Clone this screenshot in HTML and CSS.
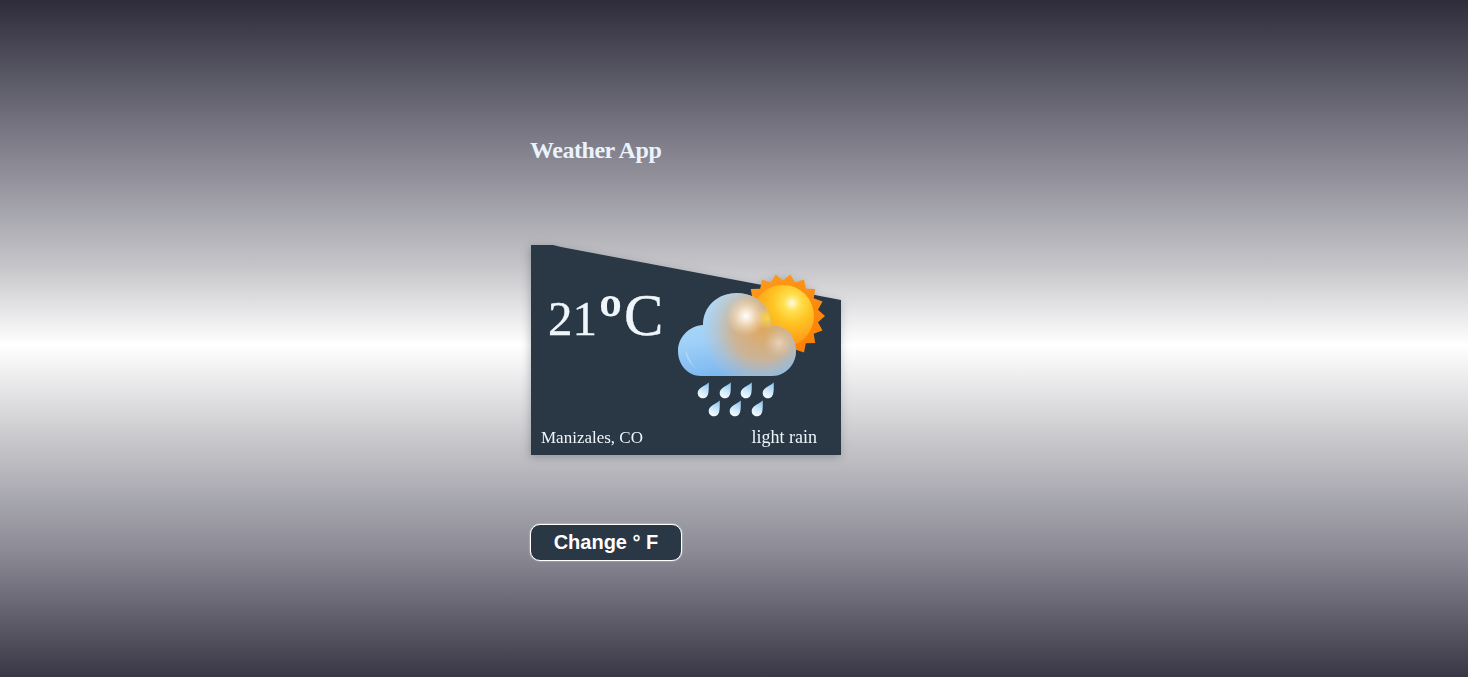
FILE: index.html
```html
<!DOCTYPE html>
<html lang="en">
<head>
<meta charset="utf-8">
<title>Weather App</title>
<link rel="stylesheet" href="styles.css">
</head>
<body>
<main class="app">
  <h1 class="title">Weather App</h1>
  <section class="card">
    <div class="card-top">
      <p class="temp"><span class="digits">21</span><span class="degree">º</span><span class="unit">C</span></p>
      <svg class="icon" width="165" height="160" viewBox="0 0 165 160" aria-label="light rain">
        <defs>
          <linearGradient id="spike" x1="0.2" y1="0" x2="0.8" y2="1">
            <stop offset="0" stop-color="#ff9a1a"/><stop offset="1" stop-color="#fb7f06"/>
          </linearGradient>
          <radialGradient id="sun" gradientUnits="userSpaceOnUse" cx="122" cy="38" r="46">
            <stop offset="0" stop-color="#fffbe0"/><stop offset="0.18" stop-color="#ffe04f"/>
            <stop offset="0.42" stop-color="#ffc524"/><stop offset="1" stop-color="#ff8f14"/>
          </radialGradient>
          <linearGradient id="cloudBase" x1="0" y1="0.1" x2="0.25" y2="1">
            <stop offset="0" stop-color="#b5dcf7"/><stop offset="0.55" stop-color="#9fd0f8"/><stop offset="1" stop-color="#7cb8f0"/>
          </linearGradient>
          <radialGradient id="warm" gradientUnits="userSpaceOnUse" cx="92" cy="64" r="62">
            <stop offset="0" stop-color="#dfa85e" stop-opacity="1"/><stop offset="0.5" stop-color="#d2b28e" stop-opacity="0.9"/>
            <stop offset="1" stop-color="#b9c4d0" stop-opacity="0"/>
          </radialGradient>
          <radialGradient id="glow" gradientUnits="userSpaceOnUse" cx="76" cy="51" r="20">
            <stop offset="0" stop-color="#fff" stop-opacity="1"/><stop offset="0.3" stop-color="#fbeedd" stop-opacity="0.85"/>
            <stop offset="1" stop-color="#f3d9b0" stop-opacity="0"/>
          </radialGradient>
          <radialGradient id="glow2" gradientUnits="userSpaceOnUse" cx="109" cy="78" r="15">
            <stop offset="0" stop-color="#ecd6bd" stop-opacity="0.9"/><stop offset="1" stop-color="#e0c4a4" stop-opacity="0"/>
          </radialGradient>
          <radialGradient id="yellow" gradientUnits="userSpaceOnUse" cx="97" cy="53" r="11">
            <stop offset="0" stop-color="#ffd93a" stop-opacity="0.9"/><stop offset="1" stop-color="#ffd93a" stop-opacity="0"/>
          </radialGradient>
          <linearGradient id="drop" x1="0.7" y1="0" x2="0.3" y2="1">
            <stop offset="0" stop-color="#8cc8ef"/><stop offset="0.55" stop-color="#d0e9fa"/><stop offset="1" stop-color="#f8fcff"/>
          </linearGradient>
          <path id="cloudShape" d="M31 111C18 111 8 100 8 86C8 72 19 61 33 60C33 42 47 28 67 28C86 28 101 42 101 60C116 60 126 72 126 86C126 100 115 111 102 111Z"/>
          <path id="rain" d="M5.8-10.5C5.8-5 5.9-2 5 1.5A5.3 5.3 0 1 1-3.6-4C-1-6.3 3-8 5.8-10.5Z" fill="url(#drop)"/>
        </defs>
        <polygon transform="translate(113 51)" fill="url(#spike)" points="42,0 35,6.2 39.5,14.4 30.7,17.75 32.2,27 22.8,27.2 21,36.4 12.1,33.4 7.3,41.4 0,35.5 -7.3,41.4 -12.1,33.4 -21,36.4 -22.8,27.2 -32.2,27 -30.7,17.75 -39.5,14.4 -35,6.2 -42,0 -35,-6.2 -39.5,-14.4 -30.7,-17.75 -32.2,-27 -22.8,-27.2 -21,-36.4 -12.1,-33.4 -7.3,-41.4 0,-35.5 7.3,-41.4 12.1,-33.4 21,-36.4 22.8,-27.2 32.2,-27 30.7,-17.75 39.5,-14.4 35,-6.2"/>
        <circle cx="113" cy="51" r="31" fill="url(#sun)"/>
        <use href="#cloudShape" fill="url(#cloudBase)"/>
        <use href="#cloudShape" fill="url(#warm)"/>
        <use href="#cloudShape" fill="url(#yellow)"/>
        <use href="#cloudShape" fill="url(#glow)"/>
        <use href="#cloudShape" fill="url(#glow2)"/>
        <path d="M16 85C18 92 21 98 26 104C21 99 15 93 16 85Z" fill="#d8ecfb" opacity="0.5"/>
        <use href="#rain" x="33" y="128"/><use href="#rain" x="55" y="128"/><use href="#rain" x="76" y="128"/><use href="#rain" x="98" y="128"/>
        <use href="#rain" x="44" y="146"/><use href="#rain" x="65" y="146"/><use href="#rain" x="87" y="146"/>
      </svg>
    </div>
    <div class="card-bottom">
      <span>Manizales, CO</span>
      <span class="desc">light rain</span>
    </div>
  </section>
  <button class="toggle" type="button">Change ° F</button>
</main>
</body>
</html>
```
FILE: styles.css
```css
* { box-sizing: border-box; }
html, body { height: 100%; }
body {
  margin: 0;
  background: linear-gradient(180deg, #2e2c3b 0%, #8d8c97 25%, #c4c4c8 39%, #ffffff 51%, #c4c4c8 66%, #8d8c97 81%, #393745 100%);
  font-family: "Liberation Serif", "Times New Roman", serif;
  overflow: hidden;
}
.app {
  display: flex;
  flex-direction: column;
  align-items: flex-start;
  padding: 136px 0 0 530px;
}
.title {
  margin: 0 0 81px;
  font-size: 24px;
  line-height: 28px;
  font-weight: 700;
  letter-spacing: -0.45px;
  color: #eaf3fb;
}
.card {
  position: relative;
  display: flex;
  flex-direction: column;
  width: 310px;
  height: 210px;
  margin-left: 1px;
  color: #eef6fc;
  filter: drop-shadow(-1px 2px 4px rgba(40, 45, 55, 0.3));
}
.card::before {
  content: "";
  position: absolute;
  inset: 0;
  background: #2a3744;
  clip-path: polygon(0 0, 22px 0, 30px 2px, 100% 55px, 100% 100%, 0 100%);
}
.card-top, .card-bottom { position: relative; }
.card-top {
  display: flex;
  justify-content: space-between;
  align-items: flex-start;
  padding: 20px 6px 0 17px;
}
.temp {
  margin: 25px 0 0;
  line-height: 50px;
  white-space: nowrap;
  -webkit-text-stroke: 0.4px #eef6fc;
}
.digits { font-size: 49px; }
.degree {
  font-size: 70px;
  font-weight: 700;
  line-height: 40px;
  vertical-align: -8px;
  -webkit-text-stroke: 0;
  margin-left: 2px;
}
.unit { font-size: 59px; line-height: 50px; margin-left: 2px; }
.icon { display: block; }
.card-bottom {
  display: flex;
  justify-content: space-between;
  align-items: baseline;
  margin-top: auto;
  padding: 0 24px 7px 10px;
  font-size: 17px;
  line-height: 20px;
}
.desc { font-size: 18px; }
.toggle {
  width: 152px;
  height: 37px;
  margin-top: 69px;
  padding: 0;
  border: 1px solid #fff;
  border-radius: 10px;
  box-shadow: 0 0 1.5px #fff;
  background: #2a3744;
  color: #fff;
  font-family: "Liberation Sans", Arial, sans-serif;
  font-size: 20px;
  font-weight: 700;
}
```
